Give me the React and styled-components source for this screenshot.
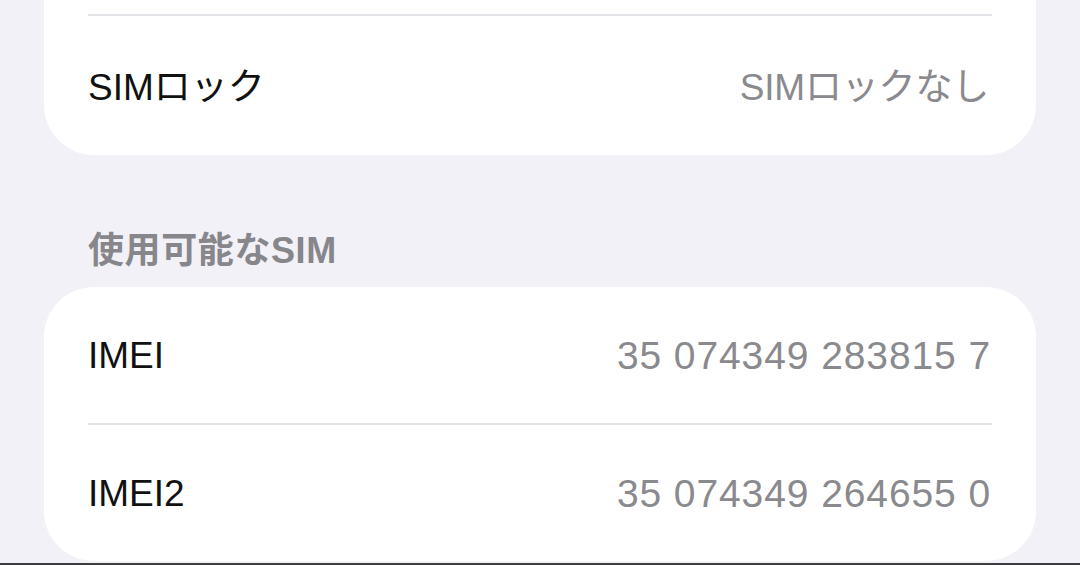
import React from "react";
import styled, { createGlobalStyle } from "styled-components";

const GlobalStyle = createGlobalStyle`
  html, body {
    margin: 0;
    padding: 0;
    background: #f2f1f7;
  }
`;

const rows = {
  lock: [{ label: "SIMロック", value: "SIMロックなし" }],
  sim: [
    { label: "IMEI", value: "35 074349 283815 7" },
    { label: "IMEI2", value: "35 074349 264655 0" },
  ],
};

const App = () => {
  return (
    <Page>
      <GlobalStyle />
      <Card $clipped>
        <Divider />
        {rows.lock.map((r) => (
          <Row key={r.label} $height={139} $nudge={-4}>
            <Label>{r.label}</Label>
            <Value>{r.value}</Value>
          </Row>
        ))}
      </Card>

      <SectionHeader>使用可能なSIM</SectionHeader>

      <Card>
        {rows.sim.map((r, i) => (
          <React.Fragment key={r.label}>
            {i > 0 && <Divider />}
            <Row $height={136} $nudge={2}>
              <Label>{r.label}</Label>
              <Value $mono>{r.value}</Value>
            </Row>
          </React.Fragment>
        ))}
      </Card>

      <BottomEdge />
    </Page>
  );
};

export default App;

const Page = styled.div`
  height: 565px;
  overflow: hidden;
  display: flex;
  flex-direction: column;
  background: #f2f1f7;
  padding: 0 44px;
  box-sizing: border-box;
  font-family: "Liberation Sans", "Noto Sans CJK JP", sans-serif;
`;

const Card = styled.div`
  background: #fff;
  border-radius: ${(p) => (p.$clipped ? "0 0 50px 50px" : "50px")};
  padding-top: ${(p) => (p.$clipped ? "14px" : "0")};
  padding-left: 44px;
  padding-right: 44px;
  display: flex;
  flex-direction: column;
  flex-shrink: 0;
`;

const Divider = styled.div`
  height: 2px;
  background: #e4e4e8;
`;

const Row = styled.div`
  height: ${(p) => p.$height}px;
  display: flex;
  align-items: center;
  justify-content: space-between;
  padding-top: ${(p) => Math.max(p.$nudge, 0)}px;
  padding-bottom: ${(p) => Math.max(-p.$nudge, 0)}px;
  box-sizing: border-box;
`;

const Label = styled.span`
  font-size: 37px;
  color: #111;
`;

const Value = styled.span`
  font-size: ${(p) => (p.$mono ? "39px" : "37px")};
  color: #8a8a8e;
  letter-spacing: ${(p) => (p.$mono ? "0.9px" : "-0.2px")};
  margin-right: ${(p) => (p.$mono ? "1px" : "3px")};
`;

const SectionHeader = styled.div`
  height: 132px;
  flex-shrink: 0;
  display: flex;
  align-items: flex-end;
  padding: 0 44px 14px;
  box-sizing: border-box;
  font-size: 36px;
  font-weight: 600;
  letter-spacing: 0.6px;
  color: #86868b;
`;

const BottomEdge = styled.div`
  margin: 2px -44px 0;
  height: 2px;
  flex-shrink: 0;
  background: #3d3d40;
`;
